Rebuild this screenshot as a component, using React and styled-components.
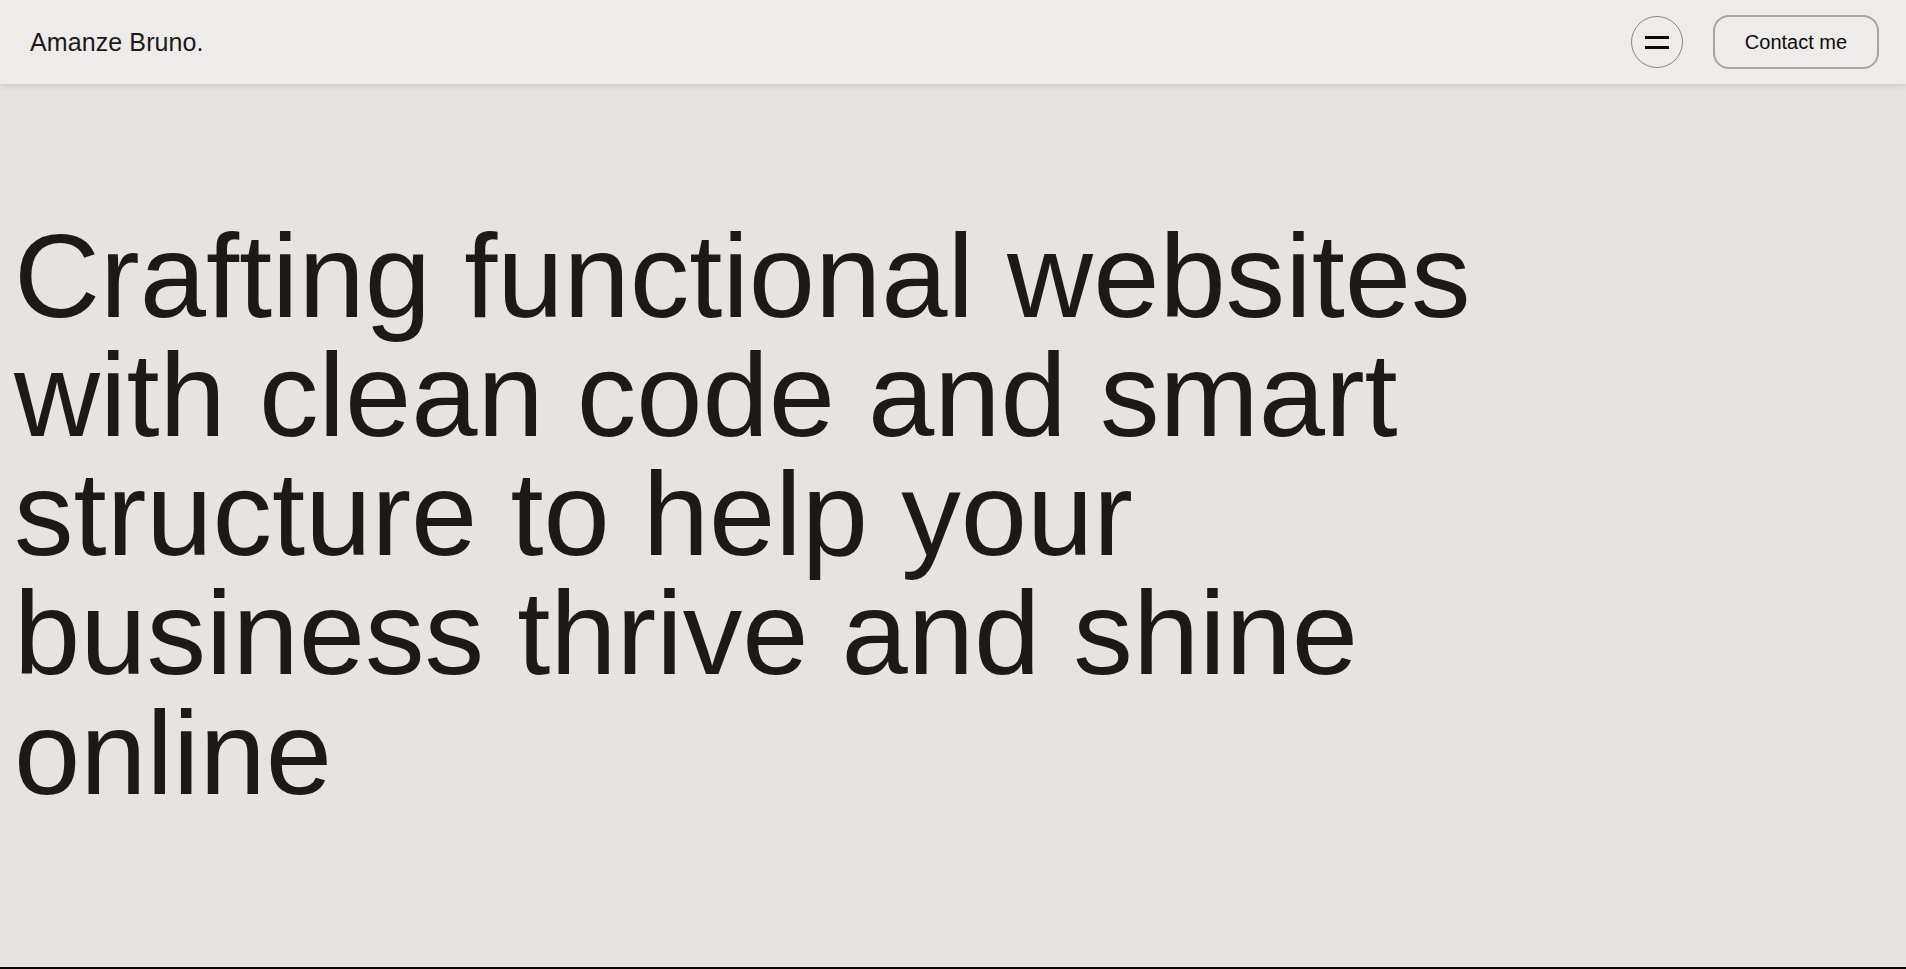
import React from "react";
import styled, { createGlobalStyle } from "styled-components";

const GlobalStyle = createGlobalStyle`
  * {
    box-sizing: border-box;
  }
  html, body {
    margin: 0;
    padding: 0;
    background: #e5e4e2;
    color: #1c1917;
    font-family: "Liberation Sans", Arial, sans-serif;
  }
`;

const Header = styled.header`
  position: sticky;
  top: 0;
  z-index: 10;
  height: 84px;
  display: flex;
  align-items: center;
  justify-content: space-between;
  padding: 0 27px 0 30px;
  background: #edecea;
  box-shadow: 0 2px 6px rgba(0, 0, 0, 0.12);
`;

const Logo = styled.a`
  font-size: 25px;
  color: #1c1917;
  text-decoration: none;
  letter-spacing: 0.1px;
`;

const Actions = styled.div`
  display: flex;
  align-items: center;
  gap: 30px;
`;

const MenuBtn = styled.button`
  width: 52px;
  height: 52px;
  border-radius: 50%;
  border: 1px solid #8a8683;
  background: transparent;
  display: flex;
  flex-direction: column;
  align-items: center;
  justify-content: center;
  gap: 7px;
  padding: 0;
  cursor: pointer;
`;

const MenuLine = styled.span`
  display: block;
  width: 24px;
  height: 3px;
  background: #0c0a09;
`;

const ContactBtn = styled.button`
  width: 166px;
  height: 54px;
  border: 2px solid #aaa49f;
  border-radius: 16px;
  background: transparent;
  font-family: "Liberation Sans", Arial, sans-serif;
  font-size: 20px;
  color: #0c0a09;
  cursor: pointer;
`;

const Hero = styled.section`
  height: calc(100vh - 84px);
  padding: 132px 0 0 14px;
  border-bottom: 2px solid #0c0a09;
`;

const Headline = styled.h1`
  margin: 0;
  max-width: 1540px;
  font-size: 6.25vw;
  line-height: 1;
  font-weight: 400;
  color: #1c1917;
`;

export default function App() {
  return (
    <>
      <GlobalStyle />
      <Header>
        <Logo href="#">Amanze Bruno.</Logo>
        <Actions>
          <MenuBtn aria-label="menu">
            <MenuLine />
            <MenuLine />
          </MenuBtn>
          <ContactBtn>Contact me</ContactBtn>
        </Actions>
      </Header>
      <Hero>
        <Headline>
          Crafting functional websites with clean code and smart structure to
          help your business thrive and shine online
        </Headline>
      </Hero>
    </>
  );
}
